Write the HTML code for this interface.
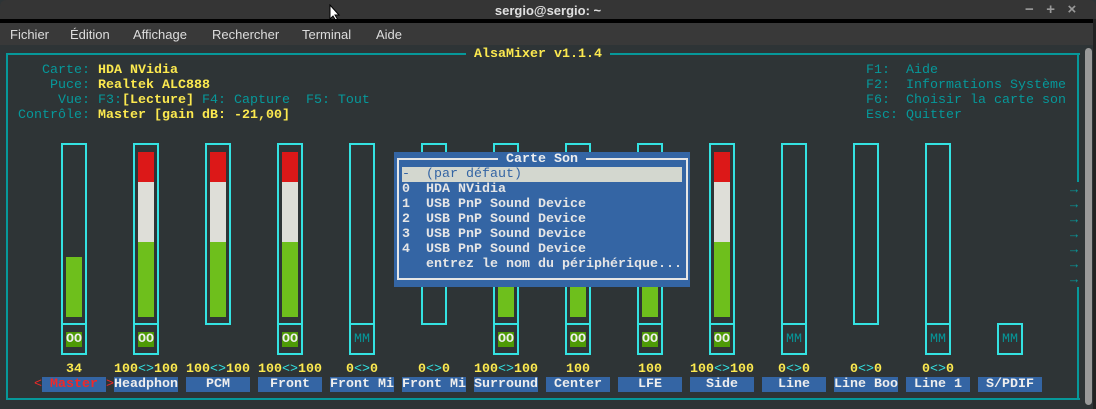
<!DOCTYPE html>
<html><head><meta charset="utf-8"><style>
*{margin:0;padding:0;box-sizing:border-box}
body{width:1096px;height:409px;background:#2e3436;position:relative;overflow:hidden;font-family:"Liberation Mono",monospace;font-size:13.33px;line-height:15px}
.a{position:absolute;white-space:pre}
.t{color:#06989a}.y{color:#fce94f;font-weight:bold}
.c{position:absolute;top:0;width:64px;height:409px}
.bx{position:absolute;left:19px;width:26px;top:143px;height:182px;border:2px solid #34e2e2}
.sw{position:absolute;left:19px;width:26px;top:323px;height:32px;border:2px solid #34e2e2}
.f{position:absolute;left:24px;width:16px}
.r{background:#dc1818;top:152px;height:30px}
.w{background:#deded8;top:182px;height:60px}
.g{background:#6ebf1c;top:242px;height:75px}
.oo{position:absolute;left:24px;width:16px;top:332px;height:15px;background:#4e9a06;color:#eee;font-weight:bold;text-align:center}
.mm{position:absolute;left:24px;width:16px;top:332px;height:15px;color:#06989a;text-align:center}
.v{position:absolute;left:-8px;width:80px;top:362px;text-align:center;color:#fce94f;font-weight:bold}
.v i{font-style:normal;color:#34e2e2;font-weight:normal}
.l{position:absolute;left:0;width:64px;top:377px;height:15px;background:#3465a4;color:#eee;font-weight:bold;text-align:center;white-space:pre}
.menu span{position:absolute;top:27px;font-family:"Liberation Sans",sans-serif;font-size:13px;color:#ddd}
</style></head><body>
<div style="position:absolute;left:0;top:0;width:1096px;height:19px;background:#353535;border-radius:6px 6px 0 0"></div>
<div class="a" style="left:0;top:3px;width:1096px;text-align:center;font-family:'Liberation Sans',sans-serif;font-weight:bold;font-size:13px;color:#e0e0e0">sergio@sergio: ~</div>
<div class="a" style="left:1025px;top:2px;color:#999;font-family:'Liberation Sans',sans-serif;font-size:15px;font-weight:bold">−&nbsp;&nbsp;&nbsp;+&nbsp;&nbsp;&nbsp;×</div>
<svg style="position:absolute;left:329px;top:4px" width="12" height="18"><path d="M1 1 L1 15 L4 12 L7 17 L9 16 L6 11 L10 11 Z" fill="#fff" stroke="#000"/></svg>
<div style="position:absolute;left:0;top:19px;width:1096px;height:4px;background:#000"></div>
<div class="menu" style="position:absolute;left:0;top:23px;width:1096px;height:22px;background:#393939"></div>
<div class="menu"><span style="left:10px">Fichier</span><span style="left:70px">Édition</span><span style="left:133px">Affichage</span><span style="left:212px">Rechercher</span><span style="left:302px">Terminal</span><span style="left:376px">Aide</span></div>
<div style="position:absolute;left:1085px;top:48px;width:7px;height:357px;background:#9a9a9a;border-radius:4px"></div>
<div style="position:absolute;left:1093px;top:19px;width:3px;height:390px;background:#222"></div>
<!-- frame -->
<div style="position:absolute;left:6px;top:53px;width:1074px;height:347px;border:2px solid #06989a;border-right:none"></div>
<div style="position:absolute;left:1077px;top:53px;width:2px;height:129px;background:#06989a"></div>
<div style="position:absolute;left:1077px;top:287px;width:2px;height:113px;background:#06989a"></div>
<div class="a" style="left:466px;top:47px;background:#2e3436;color:#fce94f;font-weight:bold"> AlsaMixer v1.1.4 </div>
<div class="a t" style="left:1070px;top:183px;line-height:15px">→
→
→
→
→
→
→</div>
<div class="a" style="left:18px;top:63px"><span class="t">   Carte: </span><span class="y">HDA NVidia</span>
<span class="t">    Puce: </span><span class="y">Realtek ALC888</span>
<span class="t">     Vue: F3:</span><span class="y">[Lecture]</span><span class="t"> F4: Capture  F5: Tout</span>
<span class="t">Contrôle: </span><span class="y">Master [gain dB: -21,00]</span></div>
<div class="a t" style="left:866px;top:63px">F1:  Aide
F2:  Informations Système
F6:  Choisir la carte son
Esc: Quitter</div>

<div class="c" style="left:42px"><div class="bx"></div><div class="f g" style="top:257px;height:60px"></div><div class="sw"></div><div class="oo">OO</div><div class="v">34</div><div class="l" style="color:#ef2929">Master</div><div class="a" style="left:-8px;top:377px;color:#ef2929">&lt;</div><div class="a" style="left:64px;top:377px;color:#ef2929">&gt;</div></div>
<div class="c" style="left:114px"><div class="bx"></div><div class="f r"></div><div class="f w"></div><div class="f g"></div><div class="sw"></div><div class="oo">OO</div><div class="v">100<i>&lt;&gt;</i>100</div><div class="l">Headphon</div></div>
<div class="c" style="left:186px"><div class="bx"></div><div class="f r"></div><div class="f w"></div><div class="f g"></div><div class="v">100<i>&lt;&gt;</i>100</div><div class="l">PCM</div></div>
<div class="c" style="left:258px"><div class="bx"></div><div class="f r"></div><div class="f w"></div><div class="f g"></div><div class="sw"></div><div class="oo">OO</div><div class="v">100<i>&lt;&gt;</i>100</div><div class="l">Front</div></div>
<div class="c" style="left:330px"><div class="bx"></div><div class="sw"></div><div class="mm">MM</div><div class="v">0<i>&lt;&gt;</i>0</div><div class="l">Front Mi</div></div>
<div class="c" style="left:402px"><div class="bx"></div><div class="v">0<i>&lt;&gt;</i>0</div><div class="l">Front Mi</div></div>
<div class="c" style="left:474px"><div class="bx"></div><div class="f r"></div><div class="f w"></div><div class="f g"></div><div class="sw"></div><div class="oo">OO</div><div class="v">100<i>&lt;&gt;</i>100</div><div class="l">Surround</div></div>
<div class="c" style="left:546px"><div class="bx"></div><div class="f r"></div><div class="f w"></div><div class="f g"></div><div class="sw"></div><div class="oo">OO</div><div class="v">100</div><div class="l">Center</div></div>
<div class="c" style="left:618px"><div class="bx"></div><div class="f r"></div><div class="f w"></div><div class="f g"></div><div class="sw"></div><div class="oo">OO</div><div class="v">100</div><div class="l">LFE</div></div>
<div class="c" style="left:690px"><div class="bx"></div><div class="f r"></div><div class="f w"></div><div class="f g"></div><div class="sw"></div><div class="oo">OO</div><div class="v">100<i>&lt;&gt;</i>100</div><div class="l">Side</div></div>
<div class="c" style="left:762px"><div class="bx"></div><div class="sw"></div><div class="mm">MM</div><div class="v">0<i>&lt;&gt;</i>0</div><div class="l">Line</div></div>
<div class="c" style="left:834px"><div class="bx"></div><div class="v">0<i>&lt;&gt;</i>0</div><div class="l">Line Boo</div></div>
<div class="c" style="left:906px"><div class="bx"></div><div class="sw"></div><div class="mm">MM</div><div class="v">0<i>&lt;&gt;</i>0</div><div class="l">Line 1</div></div>
<div class="c" style="left:978px"><div class="sw"></div><div class="mm">MM</div><div class="l">S/PDIF</div></div>

<!-- dialog -->
<div style="position:absolute;left:394px;top:152px;width:296px;height:135px;background:#3465a4"></div>
<div style="position:absolute;left:397px;top:158px;width:291px;height:122px;border:2px solid #e6e6e6"></div>
<div class="a" style="left:498px;top:152px;background:#3465a4;color:#eee;font-weight:bold"> Carte Son </div>
<div style="position:absolute;left:402px;top:167px;width:280px;height:15px;background:#d3d7cf"></div>
<div class="a" style="left:402px;top:167px;color:#3465a4">-  (par défaut)</div>
<div class="a" style="left:402px;top:182px;color:#e6e6e6;font-weight:bold">0  HDA NVidia
1  USB PnP Sound Device
2  USB PnP Sound Device
3  USB PnP Sound Device
4  USB PnP Sound Device
   entrez le nom du périphérique...</div>
</body></html>
